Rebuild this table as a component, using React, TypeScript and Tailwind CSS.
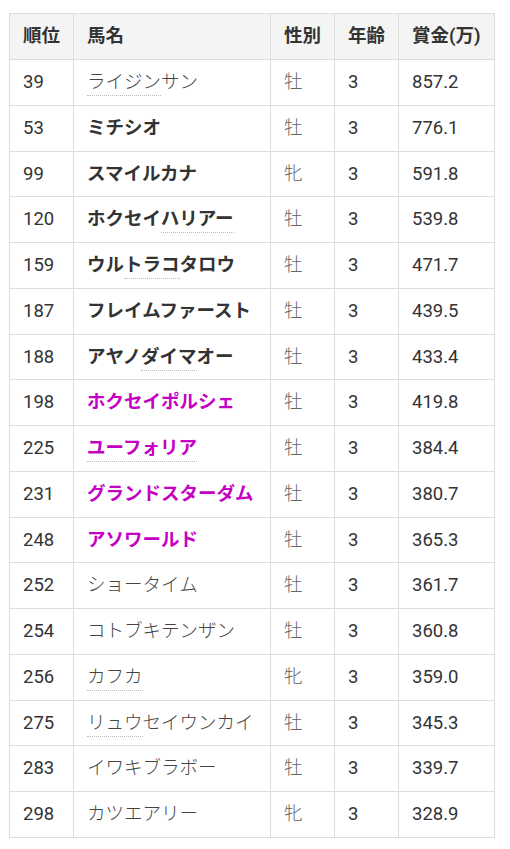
import React from "react";

type Horse = {
  rank: number;
  name: string;
  // [start, length] of the part with a dotted underline
  mark?: [number, number];
  style: "plain" | "bold" | "pink";
  sex: "牡" | "牝";
  age: number;
  prize: string;
};

const horses: Horse[] = [
  { rank: 39, name: "ライジンサン", mark: [0, 4], style: "plain", sex: "牡", age: 3, prize: "857.2" },
  { rank: 53, name: "ミチシオ", style: "bold", sex: "牡", age: 3, prize: "776.1" },
  { rank: 99, name: "スマイルカナ", style: "bold", sex: "牝", age: 3, prize: "591.8" },
  { rank: 120, name: "ホクセイハリアー", mark: [4, 4], style: "bold", sex: "牡", age: 3, prize: "539.8" },
  { rank: 159, name: "ウルトラコタロウ", mark: [2, 3], style: "bold", sex: "牡", age: 3, prize: "471.7" },
  { rank: 187, name: "フレイムファースト", style: "bold", sex: "牡", age: 3, prize: "439.5" },
  { rank: 188, name: "アヤノダイマオー", mark: [3, 3], style: "bold", sex: "牡", age: 3, prize: "433.4" },
  { rank: 198, name: "ホクセイポルシェ", style: "pink", sex: "牡", age: 3, prize: "419.8" },
  { rank: 225, name: "ユーフォリア", mark: [0, 6], style: "pink", sex: "牡", age: 3, prize: "384.4" },
  { rank: 231, name: "グランドスターダム", style: "pink", sex: "牡", age: 3, prize: "380.7" },
  { rank: 248, name: "アソワールド", style: "pink", sex: "牡", age: 3, prize: "365.3" },
  { rank: 252, name: "ショータイム", style: "plain", sex: "牡", age: 3, prize: "361.7" },
  { rank: 254, name: "コトブキテンザン", style: "plain", sex: "牡", age: 3, prize: "360.8" },
  { rank: 256, name: "カフカ", mark: [0, 3], style: "plain", sex: "牝", age: 3, prize: "359.0" },
  { rank: 275, name: "リュウセイウンカイ", mark: [0, 3], style: "plain", sex: "牡", age: 3, prize: "345.3" },
  { rank: 283, name: "イワキブラボー", style: "plain", sex: "牡", age: 3, prize: "339.7" },
  { rank: 298, name: "カツエアリー", style: "plain", sex: "牝", age: 3, prize: "328.9" },
];

const nameClass = {
  plain: "font-light text-[#444]",
  bold: "font-bold text-[#333]",
  pink: "font-bold text-[#c400c4]",
};

function HorseName({ horse }: { horse: Horse }) {
  if (!horse.mark) return <span className={nameClass[horse.style]}>{horse.name}</span>;
  const [start, len] = horse.mark;
  const chars = Array.from(horse.name);
  return (
    <span className={nameClass[horse.style]}>
      {chars.slice(0, start).join("")}
      <span className="border-b border-dotted border-[#bbb] pb-[2px]">
        {chars.slice(start, start + len).join("")}
      </span>
      {chars.slice(start + len).join("")}
    </span>
  );
}

const cell = "whitespace-nowrap border border-[#dddddd] px-[13px] py-3 leading-[20.75px]";

export default function App() {
  return (
    <div
      className="min-h-screen bg-white pl-[9px] pr-[16px] pt-[13px] text-[18.5px] text-[#333]"
      style={{ fontFamily: 'Roboto, "Noto Sans CJK JP", sans-serif' }}
    >
      <table className="w-[485px] table-fixed border-collapse">
        <colgroup>
          <col className="w-[64px]" />
          <col className="w-[197px]" />
          <col className="w-[64px]" />
          <col className="w-[64px]" />
          <col className="w-[96px]" />
        </colgroup>
        <thead>
          <tr className="bg-[#f4f4f4] text-left font-bold text-[#333]">
            <th className={`${cell} leading-[21px]`}>順位</th>
            <th className={`${cell} leading-[21px]`}>馬名</th>
            <th className={`${cell} leading-[21px]`}>性別</th>
            <th className={`${cell} leading-[21px]`}>年齢</th>
            <th className={`${cell} leading-[21px]`}>賞金(万)</th>
          </tr>
        </thead>
        <tbody>
          {horses.map((horse) => (
            <tr key={horse.rank}>
              <td className={cell}>{horse.rank}</td>
              <td className={cell}>
                <HorseName horse={horse} />
              </td>
              <td className={`${cell} font-light text-[#666]`}>{horse.sex}</td>
              <td className={cell}>{horse.age}</td>
              <td className={cell}>{horse.prize}</td>
            </tr>
          ))}
        </tbody>
      </table>
    </div>
  );
}
